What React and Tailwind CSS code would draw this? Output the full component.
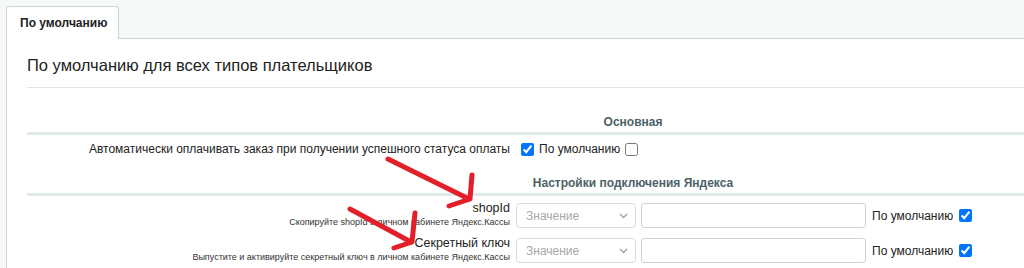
import React from "react";

function Chevron() {
  return (
    <svg width="9" height="6" viewBox="0 0 9 6" className="shrink-0">
      <path d="M1 1 L4.5 4.5 L8 1" fill="none" stroke="#9aa3a6" strokeWidth="1.3" />
    </svg>
  );
}

function Select() {
  return (
    <div className="w-[120px] h-[25px] border border-[#d9dcdd] rounded-[4px] bg-white flex items-center justify-between pl-[9px] pr-[7px]">
      <span className="text-[12px] text-[#a8a8a8]">Значение</span>
      <Chevron />
    </div>
  );
}

function Check({ checked }) {
  return (
    <input
      type="checkbox"
      defaultChecked={checked}
      className="w-[13px] h-[13px] m-0 accent-[#0075ff] shrink-0"
    />
  );
}

function SectionHeader({ title, h }) {
  return (
    <div className={`${h} flex items-end justify-center pb-[3px] border-b-[3px] border-[#e1e8ea]`}>
      <span className="text-[12px] leading-[14px] font-bold text-[#4b6267]">{title}</span>
    </div>
  );
}

function FieldRow({ label, hint }) {
  return (
    <div className="flex h-[35px]">
      <div className="w-[485px] shrink-0 text-right pr-[2px] pt-[5px]">
        <div className="text-[12.5px] leading-[15px] text-[#222]">{label}</div>
        <div className="text-[9px] leading-[12px] text-[#333]">{hint}</div>
      </div>
      <div className="flex items-center gap-[5px] pl-[4px] pt-[7px] self-start">
        <Select />
        <div className="w-[225px] h-[25px] border border-[#cfd3d4] rounded-[3px] bg-white" />
        <span className="ml-[1px] text-[12px] text-[#222]">По умолчанию</span>
        <span className="ml-[1px] flex"><Check checked /></span>
      </div>
    </div>
  );
}

export default function App() {
  return (
    <div
      className="relative w-[1024px] h-[268px] overflow-hidden bg-[#f5f9f9]"
      style={{ fontFamily: '"Liberation Sans", Arial, sans-serif' }}
    >
      <div className="pt-[6px] pl-[6px]">
        <div className="relative z-10 -mb-px w-[113px] h-[33px] border border-b-0 border-[#cfd3d3] rounded-t-[3px] bg-white flex items-center pl-[13px]">
          <span className="text-[12px] font-bold text-[#222]">По умолчанию</span>
        </div>
        <div className="border-t border-l border-[#cfd3d3] bg-white h-[240px] pl-[20px]">
          <div className="pt-[16px] pb-[12px] border-b border-[#e3e3e3]">
            <div className="text-[16.5px] leading-[20px] text-[#222]">
              По умолчанию для всех типов плательщиков
            </div>
          </div>
          <div className="w-[1212px]">
            <SectionHeader title="Основная" h="h-[47px]" />
            <div className="flex h-[28px] items-center">
              <div className="w-[485px] shrink-0 text-right pr-[2px] text-[12px] text-[#222]">
                Автоматически оплачивать заказ при получении успешного статуса оплаты
              </div>
              <div className="flex items-center pl-[9px]">
                <Check checked />
                <span className="ml-[5px] text-[12px] text-[#222]">По умолчанию</span>
                <span className="ml-[5px] flex"><Check checked={false} /></span>
              </div>
            </div>
            <SectionHeader title="Настройки подключения Яндекса" h="h-[33px]" />
            <FieldRow label="shopId" hint="Скопируйте shopId в личном кабинете Яндекс.Кассы" />
            <FieldRow
              label="Секретный ключ"
              hint="Выпустите и активируйте секретный ключ в личном кабинете Яндекс.Кассы"
            />
          </div>
        </div>
      </div>
      <svg
        className="absolute left-0 top-0 pointer-events-none"
        width="1024"
        height="268"
        viewBox="0 0 1024 268"
      >
        <g stroke="#e3202a" strokeWidth="5" strokeLinecap="round" fill="none">
          <path d="M388 159 L469 199" />
          <path d="M472 175 L470 199 L449 206" strokeLinejoin="round" />
          <path d="M350 209 L411 242" />
          <path d="M415 213 L412 242 L394 248" strokeLinejoin="round" />
        </g>
      </svg>
    </div>
  );
}
